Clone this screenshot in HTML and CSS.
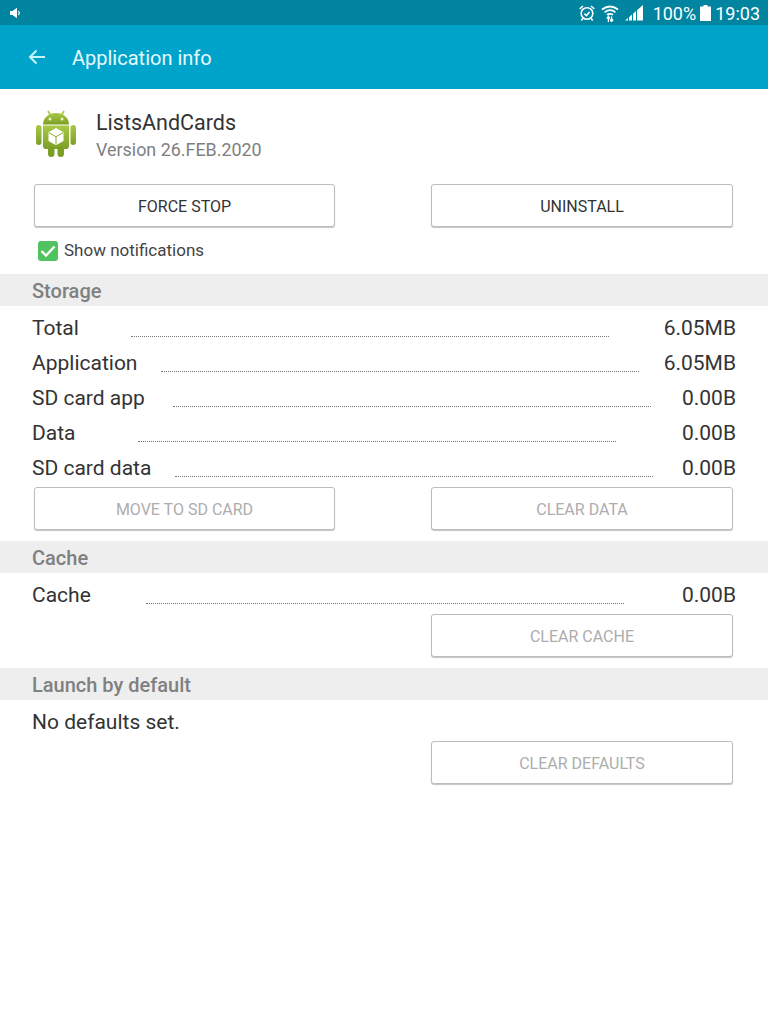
FILE: index.html
```html
<!DOCTYPE html>
<html>
<head>
<meta charset="UTF-8">
<title>Application info</title>
<link rel="stylesheet" href="styles.css">
</head>
<body>
	<div class="status_bar">
		<svg width="11" height="12" viewBox="0 0 11 12"><path d="M0 4h2.500L7 .8v10.400L2.500 8H0z" fill="#fff"/><path d="M8.500 3.800q1.600 2.200 0 4.400" fill="none" stroke="#fff" stroke-width="1.200"/></svg>
		<div class="status_right">
			<svg width="18" height="18" viewBox="0 0 18 18" fill="none" stroke="#fff" stroke-width="1.600"><circle cx="9" cy="9.500" r="5.800"/><path d="M6.400 9.600l2 2 3.200-3.600"/><path d="M1.800 4.800L5 2M16.200 4.800L13 2M4.800 14.400l-1.500 2M13.200 14.400l1.500 2"/></svg>
			<svg class="ic_wifi" width="18" height="18" viewBox="0 0 18 18" fill="none" stroke="#fff" stroke-width="1.800"><path d="M1 5.500q8-6 16 0M3.600 8.200q5.400-4 10.800 0M6 10.800q3-2 6 0"/><path d="M5.900 14.600l1.500-2.400 1.500 2.400M7.400 13v5M10.600 12.500v5M9.100 15.300l1.500 2.400 1.500-2.400" stroke-width="1.300"/></svg>
			<svg class="ic_signal" width="18" height="16" viewBox="0 0 18 16" fill="#fff"><path d="M0 15.500l3-2.500v2.500zM4 12.200l3-2.600v5.900H4zM8 8.700l3-2.600v9.400H8zM12 5.300L18 0v15.500h-6z"/></svg>
			<span class="status_pct">100%</span>
			<svg class="ic_battery" width="11" height="16" viewBox="0 0 11 16" fill="#fff"><path d="M3.500 0h4v1.500H11V16H0V1.500h3.500z"/></svg>
			<span class="status_time">19:03</span>
		</div>
	</div>

	<div class="action_bar">
		<svg width="18" height="16" viewBox="0 0 18 16" fill="none" stroke="#c4f6f8" stroke-width="2"><path d="M17 8H2M8.500 1.500L2 8l6.500 6.500"/></svg>
		<h1>Application info</h1>
	</div>

	<div class="app_head">
		<svg class="app_icon" width="42" height="48" viewBox="0 0 42 48">
			<defs>
				<linearGradient id="vert" x1="0" y1="0" x2="0" y2="1">
					<stop offset="0" stop-color="#a9c947"/>
					<stop offset="1" stop-color="#7c9f25"/>
				</linearGradient>
			</defs>
			<path d="M13 1l3 5M29 1l-3 5" stroke="#a4c83a" stroke-width="1.500" fill="none"/>
			<path d="M8 14.500C8 7.500 14 3 21 3s13 4.500 13 11.500z" fill="url(#vert)"/>
			<circle cx="15" cy="9" r="1.500" fill="#e8f0cc"/>
			<circle cx="27" cy="9" r="1.500" fill="#e8f0cc"/>
			<path d="M8 15.500h26V36a3 3 0 0 1-3 3H11a3 3 0 0 1-3-3z" fill="url(#vert)"/>
			<rect x="1" y="15" width="5.500" height="20" rx="2.700" fill="url(#vert)"/>
			<rect x="35.500" y="15" width="5.500" height="20" rx="2.700" fill="url(#vert)"/>
			<rect x="13" y="36" width="6.500" height="11" rx="3.200" fill="#7c9f25"/>
			<rect x="22.500" y="36" width="6.500" height="11" rx="3.200" fill="#7c9f25"/>
			<path d="M21 18l7.500 4.200v8.800L21 35.300 13.500 31v-8.800z" fill="#fff"/>
			<path d="M14 22.700l7 4 7-4M21 26.700v8" stroke="#8cb02b" stroke-width="1" fill="none"/>
		</svg>
		<div class="app_names">
			<div class="app_name">ListsAndCards</div>
			<div class="app_version">Version 26.FEB.2020</div>
		</div>
	</div>

	<div class="btn_row btn_row_top">
		<a class="btn">FORCE STOP</a>
		<a class="btn">UNINSTALL</a>
	</div>

	<div class="notif">
		<span class="checkbox"><svg width="20" height="20" viewBox="0 0 20 20" fill="none" stroke="#fff" stroke-width="2.400"><path d="M3.500 10l4.500 4.500 8.500-9"/></svg></span>
		<span>Show notifications</span>
	</div>

	<h2 class="section">Storage</h2>
	<div class="rows">
		<div class="row"><span>Total</span><i class="dots dots_total"></i><span class="val">6.05MB</span></div>
		<div class="row"><span>Application</span><i class="dots dots_app"></i><span class="val">6.05MB</span></div>
		<div class="row"><span>SD card app</span><i class="dots dots_sdapp"></i><span class="val">0.00B</span></div>
		<div class="row"><span>Data</span><i class="dots dots_data"></i><span class="val">0.00B</span></div>
		<div class="row"><span>SD card data</span><i class="dots dots_sddata"></i><span class="val">0.00B</span></div>
	</div>
	<div class="btn_row">
		<a class="btn disabled">MOVE TO SD CARD</a>
		<a class="btn disabled">CLEAR DATA</a>
	</div>

	<h2 class="section">Cache</h2>
	<div class="rows">
		<div class="row"><span>Cache</span><i class="dots dots_cache"></i><span class="val">0.00B</span></div>
	</div>
	<div class="btn_row btn_row_end">
		<a class="btn disabled">CLEAR CACHE</a>
	</div>

	<h2 class="section">Launch by default</h2>
	<div class="rows">
		<div class="row"><span>No defaults set.</span></div>
	</div>
	<div class="btn_row btn_row_end">
		<a class="btn disabled">CLEAR DEFAULTS</a>
	</div>
</body>
</html>
```

FILE: styles.css
```css
html{
	height:100%;
}

body{
	margin:0;
	min-height:1024px;
	background:#fff;
	font-family:Roboto, "Liberation Sans", sans-serif;
	color:#333;
}

.status_bar{
	height:25px;
	background:#00849f;
	display:flex;
	align-items:center;
	justify-content:space-between;
	padding:0 8px 0 10px;
	color:#fff;
}

.status_right{
	display:flex;
	align-items:center;
	font-size:18px;
}

.status_right span{
	padding-top:1px;
}

.ic_wifi{
	margin-left:5px;
}

.ic_signal{
	margin-left:6px;
}

.status_pct{
	margin-left:10px;
}

.ic_battery{
	margin-left:4px;
}

.status_time{
	margin-left:4px;
}

.action_bar{
	height:64px;
	background:#00a4ca;
	display:flex;
	align-items:center;
	padding-left:28px;
	box-sizing:border-box;
}

.action_bar h1{
	margin:1px 0 0 26px;
	font-size:20px;
	font-weight:400;
	color:#e6fbfd;
}

.app_head{
	display:flex;
	align-items:flex-start;
	padding:21px 0 0 35px;
	height:75px;
	box-sizing:border-box;
}

.app_names{
	margin:-1px 0 0 19px;
}

.app_name{
	font-size:21.5px;
	line-height:28px;
}

.app_version{
	font-size:17.900px;
	line-height:24px;
	color:#808080;
	margin-top:1px;
}

.btn_row{
	display:flex;
	justify-content:space-between;
	padding:0 35px 0 34px;
}

.btn_row_end{
	justify-content:flex-end;
}

.btn_row_top{
	margin-top:20px;
}

.btn{
	width:301px;
	height:43px;
	margin-bottom:1px;
	box-sizing:border-box;
	display:flex;
	align-items:center;
	justify-content:center;
	padding-top:2px;
	background:#fff;
	border:1px solid #bdbdbd;
	border-radius:3px;
	box-shadow:0 1px 1px #c4c4c4;
	font-size:16px;
	color:#333;
}

.btn_row .btn:last-child{
	width:302px;
}

.btn.disabled{
	color:#adadad;
}

.notif{
	display:flex;
	align-items:center;
	height:46px;
	padding:0 0 2px 38px;
	box-sizing:border-box;
	font-size:17px;
	color:#444;
}

.checkbox{
	width:20px;
	height:20px;
	margin:2px 6px 0 0;
	background:#50c25f;
	border-radius:3px;
}

.checkbox svg{
	display:block;
}

.section{
	margin:0;
	height:32px;
	background:#eee;
	padding-left:32px;
	font-size:20px;
	font-weight:500;
	line-height:35px;
	color:#808080;
}

.rows{
	padding:5px 32px 0;
}

.row{
	display:flex;
	height:35px;
	line-height:34px;
	font-size:21px;
	color:#333;
	white-space:nowrap;
}

.val{
	margin-left:auto;
}

.dots{
	display:block;
	flex:none;
	width:478px;
	height:25px;
	border-bottom:1px dotted #777;
}

.dots_total{ margin-left:52px; }
.dots_app{ margin-left:24px; }
.dots_sdapp{ margin-left:28px; }
.dots_data{ margin-left:62px; }
.dots_sddata{ margin-left:24px; }
.dots_cache{ margin-left:55px; }

.rows + .btn_row{
	margin:1px 0 10px;
}
```
